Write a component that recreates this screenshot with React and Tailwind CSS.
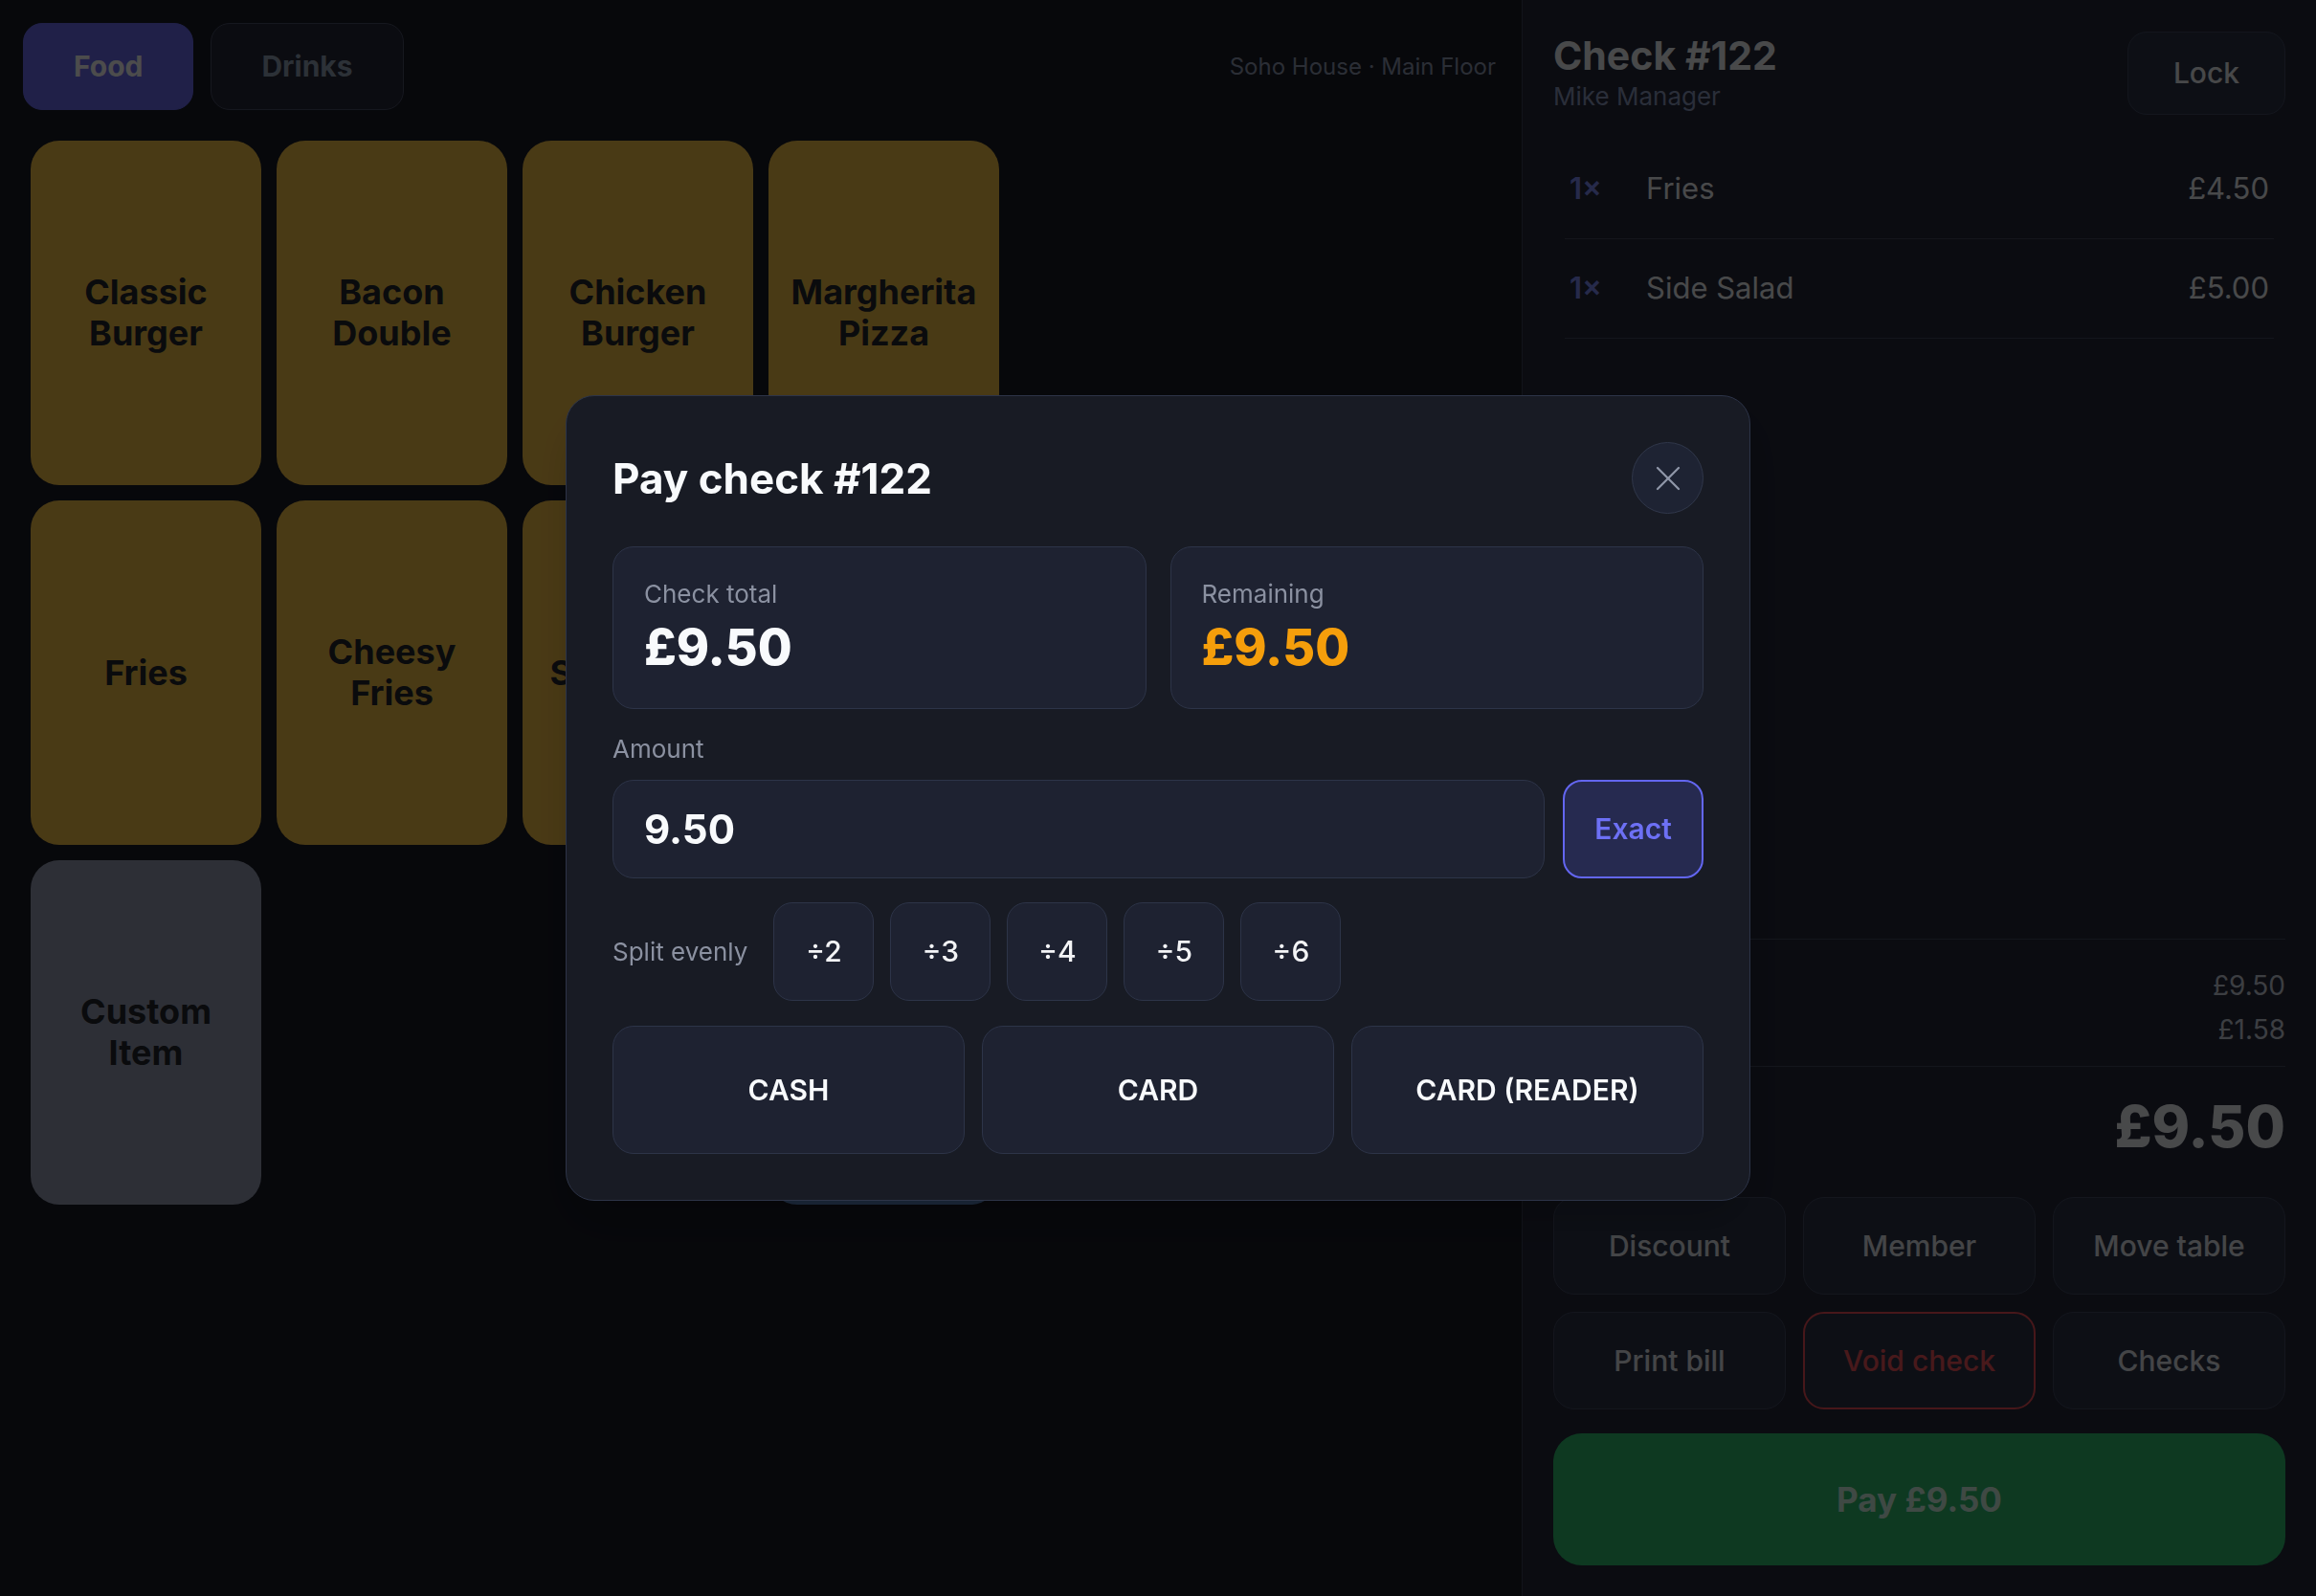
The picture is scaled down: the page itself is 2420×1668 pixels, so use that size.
import { X } from 'lucide-react'

const tiles = [
    { name: 'Classic Burger', kind: 'food' },
    { name: 'Bacon Double', kind: 'food' },
    { name: 'Chicken Burger', kind: 'food' },
    { name: 'Margherita Pizza', kind: 'food' },
    { name: '', kind: 'empty' },
    { name: '', kind: 'empty' },
    { name: 'Fries', kind: 'food' },
    { name: 'Cheesy Fries', kind: 'food' },
    { name: 'Side Salad', kind: 'food' },
    { name: 'Onion Rings', kind: 'food' },
    { name: 'Garlic Bread', kind: 'food' },
    { name: 'Sweet Potato', kind: 'food' },
    { name: 'Custom Item', kind: 'custom' },
    { name: '', kind: 'empty' },
    { name: '', kind: 'empty' },
    { name: 'Gift Card', kind: 'blue' },
]

const lines = [
    { qty: 1, name: 'Fries', price: '£4.50' },
    { qty: 1, name: 'Side Salad', price: '£5.00' },
]

function Tile({ tile }) {
    if (tile.kind === 'empty') return <div />
    const color = {
        food: 'bg-[#f6c248]',
        custom: 'bg-[#989fb5]',
        blue: 'bg-[#5f8ccc]',
    }[tile.kind]
    return (
        <button className={`${color} h-[360px] rounded-[30px] flex items-center justify-center px-4 text-center text-[36px] leading-[43px] font-bold text-[#23262e]`}>
            <span className="max-w-[200px]">{tile.name}</span>
        </button>
    )
}

function PayModal() {
    return (
        <div className="fixed inset-0 bg-black/70 flex items-center justify-center">
            <div className="w-[1238px] rounded-[30px] border border-[#2d3448] bg-[#181b24] p-12 shadow-2xl">
                <div className="flex items-center justify-between">
                    <h2 className="text-[44px] leading-[56px] font-bold text-[#f8fafc]">Pay check #122</h2>
                    <button className="w-[75px] h-[75px] rounded-full border border-[#30374a] bg-[#1e2333] flex items-center justify-center text-[#8f96a8]">
                        <X size={44} strokeWidth={1.2} />
                    </button>
                </div>

                <div className="mt-[34px] grid grid-cols-2 gap-[25px]">
                    <div className="rounded-[22px] border border-[#2d3448] bg-[#1e2231] px-8 pt-8 pb-[33px]">
                        <div className="text-[26px] leading-[34px] text-[#8b91a1]">Check total</div>
                        <div className="mt-[9px] text-[52px] leading-[60px] font-extrabold text-[#f8fafc]">£9.50</div>
                    </div>
                    <div className="rounded-[22px] border border-[#2d3448] bg-[#1e2231] px-8 pt-8 pb-[33px]">
                        <div className="text-[26px] leading-[34px] text-[#8b91a1]">Remaining</div>
                        <div className="mt-[9px] text-[52px] leading-[60px] font-extrabold text-[#f59e0b]">£9.50</div>
                    </div>
                </div>

                <div className="mt-[25px] text-[26px] leading-[34px] text-[#8b91a1]">Amount</div>
                <div className="mt-[15px] flex gap-[19px]">
                    <div className="flex-1 h-[103px] rounded-[22px] border border-[#2d3448] bg-[#1e2231] px-8 flex items-center text-[42px] font-bold text-[#f8fafc]">
                        9.50
                    </div>
                    <button className="w-[147px] h-[103px] rounded-[20px] border-2 border-[#6366f1] bg-[#262a50] text-[30px] font-semibold text-[#6d70f5]">
                        Exact
                    </button>
                </div>

                <div className="mt-[25px] flex items-center">
                    <span className="text-[26px] text-[#8b91a1] mr-[27px]">Split evenly</span>
                    <div className="flex gap-[17px]">
                        {[2, 3, 4, 5, 6].map((n) => (
                            <button key={n} className="w-[105px] h-[103px] rounded-[20px] border border-[#2d3448] bg-[#1e2231] text-[30px] font-medium text-[#f3f4f6]">
                                ÷{n}
                            </button>
                        ))}
                    </div>
                </div>

                <div className="mt-[26px] grid grid-cols-3 gap-[18px]">
                    {['CASH', 'CARD', 'CARD (READER)'].map((m) => (
                        <button key={m} className="h-[134px] rounded-[22px] border border-[#2d3448] bg-[#1e2231] text-[30px] font-semibold text-[#f8fafc]">
                            {m}
                        </button>
                    ))}
                </div>
            </div>
        </div>
    )
}

export default function App() {
    return (
        <div className="relative flex h-screen w-full overflow-hidden font-[Inter,sans-serif]">
            <div className="w-[1590px] shrink-0 bg-[#181b27] flex flex-col">
                <div className="flex items-center justify-between pl-6 pr-[27px] pt-6">
                    <div className="flex gap-[18px]">
                        <button className="h-[91px] px-[52px] rounded-[20px] border border-[#6c6df2] bg-[#6c6df2] text-[30px] font-bold text-white">Food</button>
                        <button className="h-[91px] px-[52px] rounded-[20px] border border-[#4a5068] bg-[#25283a] text-[30px] font-bold text-[#94a3b8]">Drinks</button>
                    </div>
                    <span className="text-[24px] text-[#8f9ab3]">Soho House · Main Floor</span>
                </div>
                <div className="mt-8 px-8 grid grid-cols-6 gap-x-4 gap-y-4">
                    {tiles.map((t, i) => <Tile key={i} tile={t} />)}
                </div>
            </div>

            <div className="flex-1 bg-[#25283a] border-l border-[#3c4358] flex flex-col p-8">
                <div className="flex items-start justify-between">
                    <div>
                        <div className="text-[41px] leading-[48px] font-bold text-[#f1f3f7] mt-[2px]">Check #122</div>
                        <div className="text-[26px] leading-[36px] text-[#8e9bc0] mt-[1px]">Mike Manager</div>
                    </div>
                    <button className="mt-[1px] w-[165px] h-[87px] rounded-[20px] border border-[#434b63] bg-[#2d3449] text-[30px] font-medium text-[#eef0f4]">Lock</button>
                </div>

                <div className="flex-1 mt-[26px] mx-3">
                    {lines.map((l, i) => (
                        <div key={i} className="h-[104px] flex items-center border-b border-[#454c60] px-[5px] text-[31px]">
                            <span className="w-[80px] font-semibold text-[#818cf8]">{l.qty}×</span>
                            <span className="flex-1 text-[#f1f3f7]">{l.name}</span>
                            <span className="text-[#f1f3f7]">{l.price}</span>
                        </div>
                    ))}
                </div>

                <div className="border-t border-[#454c60] pt-[25px] pb-[15px] text-[28px] leading-[46px] text-[#c9cfdc]">
                    <div className="flex justify-between"><span>Subtotal</span><span>£9.50</span></div>
                    <div className="flex justify-between"><span>VAT (incl.)</span><span>£1.58</span></div>
                </div>
                <div className="border-t border-[#454c60] h-[124px] flex items-center justify-between">
                    <span className="text-[32px] font-semibold text-[#f1f3f7]">Total</span>
                    <span className="text-[60px] font-extrabold text-[#f1f3f7]">£9.50</span>
                </div>
                <div className="mt-[13px] grid grid-cols-3 gap-[18px]">
                    {['Discount', 'Member', 'Move table', 'Print bill', 'Void check', 'Checks'].map((a) => (
                        <button
                            key={a}
                            className={a === 'Void check'
                                ? 'h-[102px] rounded-[22px] border-2 border-[#ef4f57] bg-[#2d3449] text-[30px] font-medium text-[#f0555c]'
                                : 'h-[102px] rounded-[22px] border border-[#434b63] bg-[#2d3449] text-[30px] font-medium text-[#e4e8ef]'}
                        >
                            {a}
                        </button>
                    ))}
                </div>
                <button className="mt-[25px] h-[138px] rounded-[30px] bg-[#2fbf71] text-[35px] font-bold text-[#d4f5e4]">
                    Pay £9.50
                </button>
            </div>

            <PayModal />
        </div>
    )
}
